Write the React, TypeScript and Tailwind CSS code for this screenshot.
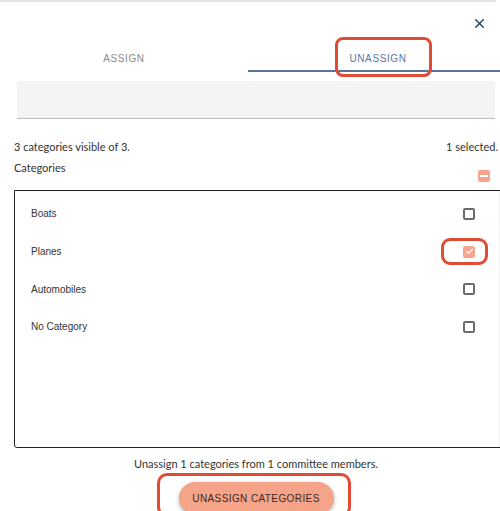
import { Check, X } from 'lucide-react';

const categories = [
  { name: 'Boats', checked: false },
  { name: 'Planes', checked: true },
  { name: 'Automobiles', checked: false },
  { name: 'No Category', checked: false },
];

function CheckBox({ checked }: { checked: boolean }) {
  if (checked) {
    return (
      <span className="flex h-[12px] w-[12px] items-center justify-center rounded-[2px] bg-[#f5a58c]">
        <Check className="h-[9px] w-[9px] text-white" strokeWidth={3} />
      </span>
    );
  }
  return <span className="block h-[12px] w-[12px] rounded-[2px] border-2 border-[#6b6b6b]" />;
}

export default function App() {
  return (
    <div className="h-[511px] w-[500px] overflow-hidden bg-white">
      <div className="w-[506px]">
        <div className="h-[2px] w-[496px] bg-[#e4e4e4]" />

        <div className="flex h-[34px] justify-end pr-[19px] pt-[14px]">
          <X className="h-[15px] w-[15px] text-[#2b3f66]" strokeWidth={2.2} />
        </div>

        <div className="flex h-[36px] font-['Liberation_Sans',Arial,sans-serif] text-[10px] tracking-[0.6px]">
          <div className="flex w-[248px] items-start justify-center pt-[15px] text-[#8a8a8a]">ASSIGN</div>
          <div className="relative flex flex-1 items-start justify-center border-b-2 border-[#5b729b] pt-[15px] text-[#5878a8]">
            <span className="ml-[2px]">UNASSIGN</span>
            <span className="absolute left-[87px] top-[1px] h-[40px] w-[97px] rounded-[8px] border-[3px] border-[#e04b36]" />
          </div>
        </div>

        <div className="ml-[17px] mt-[9px] h-[38px] w-[478px] border-b border-[#bdbdbd] bg-[#f4f4f4]" />

        <div className="pl-[14px] font-['Lato','Noto_Sans',sans-serif] text-[11px] text-[#333]">
          <div className="mt-[21px] flex w-[484px] justify-between leading-[14px]">
            <span>3 categories visible of 3.</span>
            <span>1 selected.</span>
          </div>
          <div className="mt-[7px] leading-[14px]">Categories</div>
          <div className="-mt-[5px] flex w-[476px] justify-end">
            <span className="flex h-[12px] w-[12px] items-center justify-center rounded-[2px] bg-[#f5a58c]">
              <span className="h-[2px] w-[8px] bg-white" />
            </span>
          </div>

          <div className="mt-[8px] flex h-[258px] w-[492px] overflow-hidden rounded-bl-[3px] border border-[#222] font-['Liberation_Sans',Arial,sans-serif] text-[10px]">
            <div className="flex-1 pt-[4px]">
              {categories.map((c) => (
                <div key={c.name} className="relative flex h-[37.7px] items-center justify-between pl-[16px] pr-[24px]">
                  <span>{c.name}</span>
                  <CheckBox checked={c.checked} />
                  {c.checked && (
                    <span className="absolute left-[426px] top-[5px] h-[27px] w-[47px] rounded-[9px] border-[3px] border-[#e04b36]" />
                  )}
                </div>
              ))}
            </div>
            <div className="w-[6px] bg-[#f0f0f0]" />
          </div>

          <div className="w-[484px] pt-[9px] text-center leading-[14px]">
            Unassign 1 categories from 1 committee members.
          </div>

          <div className="flex w-[484px] justify-center pt-[2px]">
            <div className="relative ml-[-4px] flex h-[44px] w-[194px] justify-center rounded-[10px] border-[3px] border-[#e04b36] pt-[6px]">
              <button className="ml-[4px] h-[32px] w-[155px] rounded-full bg-[#f5a48a] font-['Liberation_Sans',Arial,sans-serif] text-[10px] tracking-[0.4px] text-[#3a2a26] shadow-[0_2px_4px_rgba(0,0,0,0.3)]">
                UNASSIGN CATEGORIES
              </button>
            </div>
          </div>
        </div>
      </div>
    </div>
  );
}
